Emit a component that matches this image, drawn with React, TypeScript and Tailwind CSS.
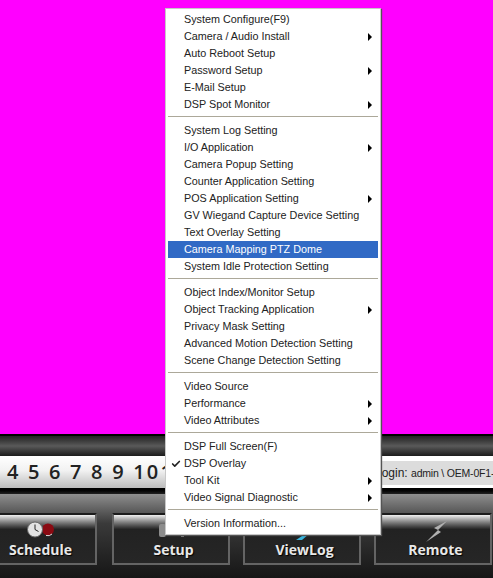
import React from 'react';
import { Check } from 'lucide-react';

type Item = { label: string; sub?: boolean; active?: boolean; checked?: boolean };

const GROUPS: Item[][] = [
  [
    { label: 'System Configure(F9)' },
    { label: 'Camera / Audio Install', sub: true },
    { label: 'Auto Reboot Setup' },
    { label: 'Password Setup', sub: true },
    { label: 'E-Mail Setup' },
    { label: 'DSP Spot Monitor', sub: true },
  ],
  [
    { label: 'System Log Setting' },
    { label: 'I/O Application', sub: true },
    { label: 'Camera Popup Setting' },
    { label: 'Counter Application Setting' },
    { label: 'POS Application Setting', sub: true },
    { label: 'GV Wiegand Capture Device Setting' },
    { label: 'Text Overlay Setting' },
    { label: 'Camera Mapping PTZ Dome', active: true },
    { label: 'System Idle Protection Setting' },
  ],
  [
    { label: 'Object Index/Monitor Setup' },
    { label: 'Object Tracking Application', sub: true },
    { label: 'Privacy Mask Setting' },
    { label: 'Advanced Motion Detection Setting' },
    { label: 'Scene Change Detection Setting' },
  ],
  [
    { label: 'Video Source' },
    { label: 'Performance', sub: true },
    { label: 'Video Attributes', sub: true },
  ],
  [
    { label: 'DSP Full Screen(F)' },
    { label: 'DSP Overlay', checked: true },
    { label: 'Tool Kit', sub: true },
    { label: 'Video Signal Diagnostic', sub: true },
  ],
  [{ label: 'Version Information...' }],
];

const MenuRow = ({ item }: { item: Item }) => (
  <div className={`relative flex h-[17px] items-center pl-[16px] pr-[6px] ${item.active ? 'bg-[#316ac5] text-white' : 'text-[#222]'}`}>
    {item.checked && <Check className="absolute left-[3px] top-[4px] h-[10px] w-[10px]" strokeWidth={4} />}
    <span className="flex-1 whitespace-nowrap">{item.label}</span>
    {item.sub && <span className="h-0 w-0 border-y-[4px] border-l-[4px] border-y-transparent border-l-black" />}
  </div>
);

const BarButton = ({ label, icon, className }: { label: string; icon?: React.ReactNode; className: string }) => (
  <div className={`relative flex h-[52px] w-[118px] shrink-0 flex-col items-center justify-end border-2 border-[#646464] border-t-[#1c1c1c] bg-gradient-to-b from-[#f0f0f0] via-[#222] via-[30%] to-[#262626] pb-[3px] pl-[5px] ${className}`}>
    {icon}
    <span className="font-['Open_Sans',sans-serif] text-[14px] font-bold leading-[20px] text-[#e8e8e8] [text-shadow:1px_1px_1px_#000]">{label}</span>
  </div>
);

export default function App() {
  return (
    <div className="relative flex h-[578px] w-[493px] flex-col overflow-hidden bg-[#ff00ff]">
      <div className="mt-[434px] h-[2px] bg-black" />
      <div className="h-[20px] bg-gradient-to-b from-[#222] via-[#5a5a5a] to-[#1c1c1c]" />
      <div className="flex h-[32px] bg-white">
        <div className="w-[165px] overflow-hidden whitespace-nowrap bg-gradient-to-b from-white via-[#f2f2f2] via-[45%] to-[#bcbcbc] pl-[7px] font-['Open_Sans',sans-serif] text-[20px] font-semibold leading-[32px] tracking-[2.2px] text-[#222]">
          4 5 6 7 8 9 101
        </div>
        <div className="flex flex-1 justify-end overflow-hidden">
          <div className="mt-[5px] h-[24px] w-[118px] overflow-hidden whitespace-nowrap bg-[#dcdcdc] font-['Liberation_Sans',sans-serif] text-[10.5px] leading-[24px] tracking-[-0.2px] text-[#222]">
            <span className="text-[12px] tracking-normal">Login: </span>admin \ OEM-0F1-
          </div>
        </div>
      </div>
      <div className="h-[6px] bg-gradient-to-b from-black to-[#222]" />
      <div className="flex-1 bg-gradient-to-b from-[#8f8f8f] via-[#3a3a3a] via-[35%] to-[#161616] pt-[19px]">
        <div className="ml-[-21px] flex">
          <BarButton
            className=""
            label="Schedule"
            icon={
              <svg className="absolute left-[46px] top-[6px]" width="28" height="17" viewBox="0 0 28 17">
                <circle cx="21" cy="8.5" r="6" fill="#8a0a12" />
                <path d="M25 13a6 6 0 0 1-6 1.5" stroke="#ddd" fill="none" />
                <circle cx="8" cy="8.5" r="7.5" fill="#e2e2e2" stroke="#666" />
                <path d="M8 3.5v5l3.5 2" stroke="#222" fill="none" />
              </svg>
            }
          />
          <BarButton
            className="ml-[15px]"
            label="Setup"
            icon={
              <svg className="absolute left-[45px] top-[8px]" width="26" height="16" viewBox="0 0 26 16">
                <rect x="0" y="1" width="7" height="13" rx="2" fill="#8c8c8c" />
                <rect x="22" y="11" width="3" height="3" fill="#777" />
              </svg>
            }
          />
          <BarButton
            className="ml-[13px]"
            label="ViewLog"
            icon={
              <svg className="absolute left-[50px] top-[17px]" width="14" height="8" viewBox="0 0 14 8">
                <path d="M13 0 1 8h6l7-6z" fill="#39b4dc" />
              </svg>
            }
          />
          <BarButton
            className="ml-[13px]"
            label="Remote"
            icon={
              <svg className="absolute left-[50px] top-[6px]" width="22" height="21" viewBox="0 0 22 21">
                <path d="M21 0 8 7l4 2L0 21 15 11l-3-2z" fill="#b0b0b0" />
              </svg>
            }
          />
        </div>
      </div>
      <div className="absolute left-[165px] top-[8px] flex h-[527px] w-[216px] flex-col border border-[#c8c8c8] bg-white px-[2px] pt-[2px] font-['Liberation_Sans',sans-serif] text-[10.8px] shadow-[1px_1px_1px_#555]">
        {GROUPS.map((group, i) => (
          <div key={i}>
            {i > 0 && <div className="mt-[3px] mb-[4px] h-[2px] border-b border-white bg-[#aca899]" />}
            {group.map(item => (
              <MenuRow key={item.label} item={item} />
            ))}
          </div>
        ))}
      </div>
    </div>
  );
}
